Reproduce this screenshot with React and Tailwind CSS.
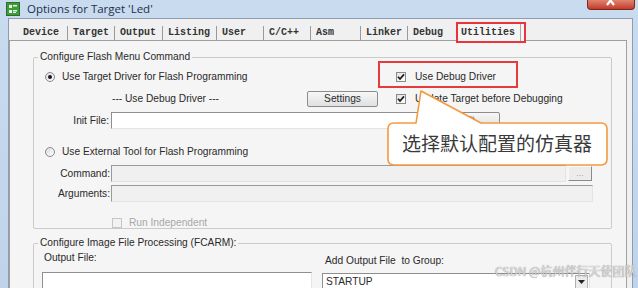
import React from "react";

const T = "text-[10.2px] leading-[12px] text-[#2a2a2a] whitespace-nowrap";

function Radio({ checked }) {
  return (
    <span className="flex h-[10px] w-[10px] shrink-0 items-center justify-center rounded-full border border-[#8a8a8a] bg-gradient-to-br from-[#dcdcdc] to-white">
      {checked && <span className="h-[4px] w-[4px] rounded-full bg-[#1a1a1a]" />}
    </span>
  );
}

function Check({ checked, disabled }) {
  return (
    <span
      className={
        disabled
          ? "flex h-[10px] w-[10px] shrink-0 items-center justify-center border border-[#c6c6c6] bg-[#f2f2f2]"
          : "flex h-[10px] w-[10px] shrink-0 items-center justify-center border border-[#8a8a8a] bg-gradient-to-br from-[#e2e2e2] to-white"
      }
    >
      {checked && (
        <svg width="8" height="8" viewBox="0 0 8 8">
          <path d="M1 3.8 L3 6 L7 1.4" stroke="#1a1a1a" strokeWidth="1.7" fill="none" />
        </svg>
      )}
    </span>
  );
}

function Tab({ w, label, sep = true }) {
  return (
    <div
      className={
        sep
          ? "h-[14px] shrink-0 border-r border-[#9a9a9a] pl-[5px] font-['Liberation_Mono','Courier_New',monospace] text-[10px] font-bold leading-[14px] text-[#333]"
          : "h-[14px] shrink-0 pl-[5px] font-['Liberation_Mono','Courier_New',monospace] text-[10px] font-bold leading-[14px] text-[#333]"
      }
      style={{ width: w }}
    >
      {label}
    </div>
  );
}

export default function App() {
  return (
    <div className="relative h-[288px] w-[638px] overflow-hidden bg-gradient-to-b from-[#c9dbef] to-[#bfd3ea] font-['Liberation_Sans',Arial,sans-serif]">
      {/* Title bar */}
      <div className="flex h-[18px] items-start">
        <svg className="ml-[6px] mt-[2px] shrink-0" width="14" height="14" viewBox="0 0 14 14">
          <rect x="0.5" y="0.5" width="13" height="13" fill="#3f9a3c" stroke="#2b6e2a" />
          <rect x="3" y="3" width="3" height="3" fill="#e8f5e0" />
          <rect x="7" y="3" width="4" height="1.5" fill="#e8f5e0" />
          <rect x="3" y="8" width="3" height="3" fill="#e8f5e0" />
          <rect x="7" y="8" width="4" height="1.5" fill="#e8f5e0" />
          <rect x="7" y="10" width="3" height="1" fill="#e8f5e0" />
        </svg>
        <div className="ml-[7px] font-['Open_Sans',sans-serif] text-[11.5px] leading-[17px] text-[#1e2f4a]">
          Options for Target 'Led'
        </div>
        <div className="ml-auto mr-[3px] flex h-[10px] w-[48px] items-end justify-center overflow-hidden rounded-b-[4px] border border-t-0 border-[#7c2a1e] bg-gradient-to-b from-[#e0836f] to-[#c2392a]">
          <svg width="12" height="10" viewBox="0 0 12 10">
            <path d="M2 -3 L9 6 M9 -3 L2 6" stroke="#ffffff" strokeWidth="2.2" />
          </svg>
        </div>
      </div>

      {/* Client area */}
      <div className="ml-[8px] mr-[5px] h-[270px] border-l border-r border-t border-[#8e9bb0] bg-[#f0f0f0]">
        {/* Tab strip */}
        <div className="flex h-[21px] items-end pl-[9px]">
          <Tab w={50} label="Device" />
          <Tab w={47} label="Target" />
          <Tab w={48} label="Output" />
          <Tab w={54} label="Listing" />
          <Tab w={47} label="User" />
          <Tab w={47} label="C/C++" />
          <Tab w={50} label="Asm" />
          <Tab w={47} label="Linker" />
          <Tab w={48} label="Debug" sep={false} />
          <div className="relative z-10 -mb-[3px] flex h-[21px] w-[70px] shrink-0 border-2 border-[#e8343a] bg-[#f5f5f5]">
            <span className="h-full w-[63px] border-r border-[#a8a8a8] pl-[3px] font-['Liberation_Mono','Courier_New',monospace] text-[10px] font-bold leading-[17px] text-[#333]">
              Utilities
            </span>
          </div>
        </div>

        {/* Tab page */}
        <div className="h-[249px] w-[618px] border-l border-r border-t border-[#a0a0a0] bg-[#f5f5f5] pl-[23px] pt-[10px]">
          <fieldset className="w-[579px] rounded-[2px] border border-[#cbcbcb]">
            <legend className={"ml-[4px] px-[2px] " + T}>Configure Flash Menu Command</legend>

            {/* Row 1 */}
            <div className="mt-[7px] flex h-[14px] items-center">
              <div className="flex w-[362px] items-center pl-[11px]">
                <Radio checked />
                <span className={"ml-[7px] " + T}>Use Target Driver for Flash Programming</span>
              </div>
              <Check checked />
              <span className={"ml-[9px] " + T}>Use Debug Driver</span>
            </div>

            {/* Row 2 */}
            <div className="mt-[7px] flex h-[16px] items-center">
              <span className={"w-[273px] pl-[78px] " + T}>--- Use Debug Driver ---</span>
              <div className="flex h-[16px] w-[71px] items-center justify-center rounded-[2px] border border-[#8c8c8c] bg-gradient-to-b from-[#f7f7f7] to-[#e0e0e0] text-[10.2px] text-[#2a2a2a]">
                Settings
              </div>
              <span className="ml-[18px]">
                <Check checked />
              </span>
              <span className={"ml-[9px] " + T}>Update Target before Debugging</span>
            </div>

            {/* Row 3 */}
            <div className="mt-[5px] flex h-[17px] items-center">
              <span className={"w-[75px] text-right " + T}>Init File:</span>
              <div className="ml-[2px] h-[17px] w-[327px] border border-b-[#e4e4e4] border-l-[#8f8f8f] border-r-[#e4e4e4] border-t-[#8f8f8f] bg-white" />
              <div className="ml-[2px] flex h-[17px] w-[60px] items-center justify-center rounded-[2px] border border-[#8c8c8c] bg-gradient-to-b from-[#f7f7f7] to-[#e0e0e0] text-[10.2px] text-[#2a2a2a]">
                Edit...
              </div>
            </div>

            {/* Row 4 */}
            <div className="mt-[16px] flex h-[14px] items-center pl-[11px]">
              <Radio />
              <span className={"ml-[7px] " + T}>Use External Tool for Flash Programming</span>
            </div>

            {/* Row 5 */}
            <div className="mt-[6px] flex h-[17px] items-center">
              <span className={"w-[76px] text-right " + T}>Command:</span>
              <div className="ml-[1px] h-[17px] w-[455px] border border-b-[#e4e4e4] border-l-[#9a9a9a] border-r-[#e4e4e4] border-t-[#9a9a9a] bg-[#f0f0f0]" />
              <div className="ml-[2px] flex h-[15px] w-[24px] items-center justify-center border border-b-[#8a8a8a] border-l-[#f8f8f8] border-r-[#8a8a8a] border-t-[#f8f8f8] bg-[#ececec] text-[9px] leading-[9px] text-[#a0a0a0]">
                ...
              </div>
            </div>

            {/* Row 6 */}
            <div className="mt-[3px] flex h-[17px] items-center">
              <span className={"w-[76px] text-right " + T}>Arguments:</span>
              <div className="ml-[1px] h-[17px] w-[482px] border border-b-[#e4e4e4] border-l-[#9a9a9a] border-r-[#e4e4e4] border-t-[#9a9a9a] bg-[#f0f0f0]" />
            </div>

            {/* Row 7 */}
            <div className="mt-[16px] flex h-[10px] items-center pl-[78px]">
              <Check disabled />
              <span className="ml-[7px] whitespace-nowrap text-[10.2px] leading-[12px] text-[#a8a8a8]">Run Independent</span>
            </div>
          </fieldset>

          <fieldset className="mt-[8px] h-[80px] w-[579px] rounded-[2px] border border-[#cbcbcb]">
            <legend className={"ml-[4px] px-[2px] " + T}>Configure Image File Processing (FCARM):</legend>
            <div className="flex">
              <div className="w-[282px]">
                <div className={"mt-[3px] pl-[10px] " + T}>Output File:</div>
                <div className="ml-[8px] mt-[8px] h-[18px] w-[270px] border border-b-[#e4e4e4] border-l-[#8f8f8f] border-r-[#e4e4e4] border-t-[#8f8f8f] bg-white" />
              </div>
              <div className="ml-[6px] w-[268px]">
                <div className={"mt-[6px] pl-[3px] " + T}>Add Output File&nbsp; to Group:</div>
                <div className="mt-[6px] flex h-[18px] w-[268px] items-center border border-b-[#e4e4e4] border-l-[#8f8f8f] border-r-[#e4e4e4] border-t-[#8f8f8f] bg-white">
                  <span className={"flex-1 pl-[3px] " + T}>STARTUP</span>
                  <div className="mr-[1px] flex h-[15px] w-[13px] items-center justify-center border border-[#b0b0b0] bg-[#ececec]">
                    <svg width="7" height="4" viewBox="0 0 7 4">
                      <path d="M0 0 L7 0 L3.5 4 Z" fill="#222" />
                    </svg>
                  </div>
                </div>
              </div>
            </div>
          </fieldset>
        </div>
      </div>

      {/* Red highlight around Use Debug Driver */}
      <div className="absolute left-[378px] top-[61px] h-[27px] w-[140px] border-2 border-[#e53b3b]" />

      {/* Callout */}
      <svg className="absolute left-[380px] top-[85px]" width="240" height="85" viewBox="0 0 240 85">
        <path
          d="M14 38 L36 38 L41 6 L101 38 L221 38 Q227 38 227 44 L227 74 Q227 80 221 80 L14 80 Q8 80 8 74 L8 44 Q8 38 14 38 Z"
          fill="#ffffff"
          stroke="#f39a3f"
          strokeWidth="1.6"
          strokeLinejoin="round"
        />
      </svg>
      <div className="absolute left-[402px] top-[132px] font-['Noto_Sans_CJK_SC',sans-serif] text-[19px] leading-[22px] text-[#3a3a3a]">
        选择默认配置的仿真器
      </div>

      {/* Watermark */}
      <div className="absolute left-[495px] top-[263px] whitespace-nowrap font-['Noto_Sans_CJK_SC',sans-serif] text-[12px] leading-[15px] text-[#dedede] [text-shadow:0_0_1px_#6a6a6a]">
        CSDN @杭州伴行天使团队
      </div>
    </div>
  );
}
